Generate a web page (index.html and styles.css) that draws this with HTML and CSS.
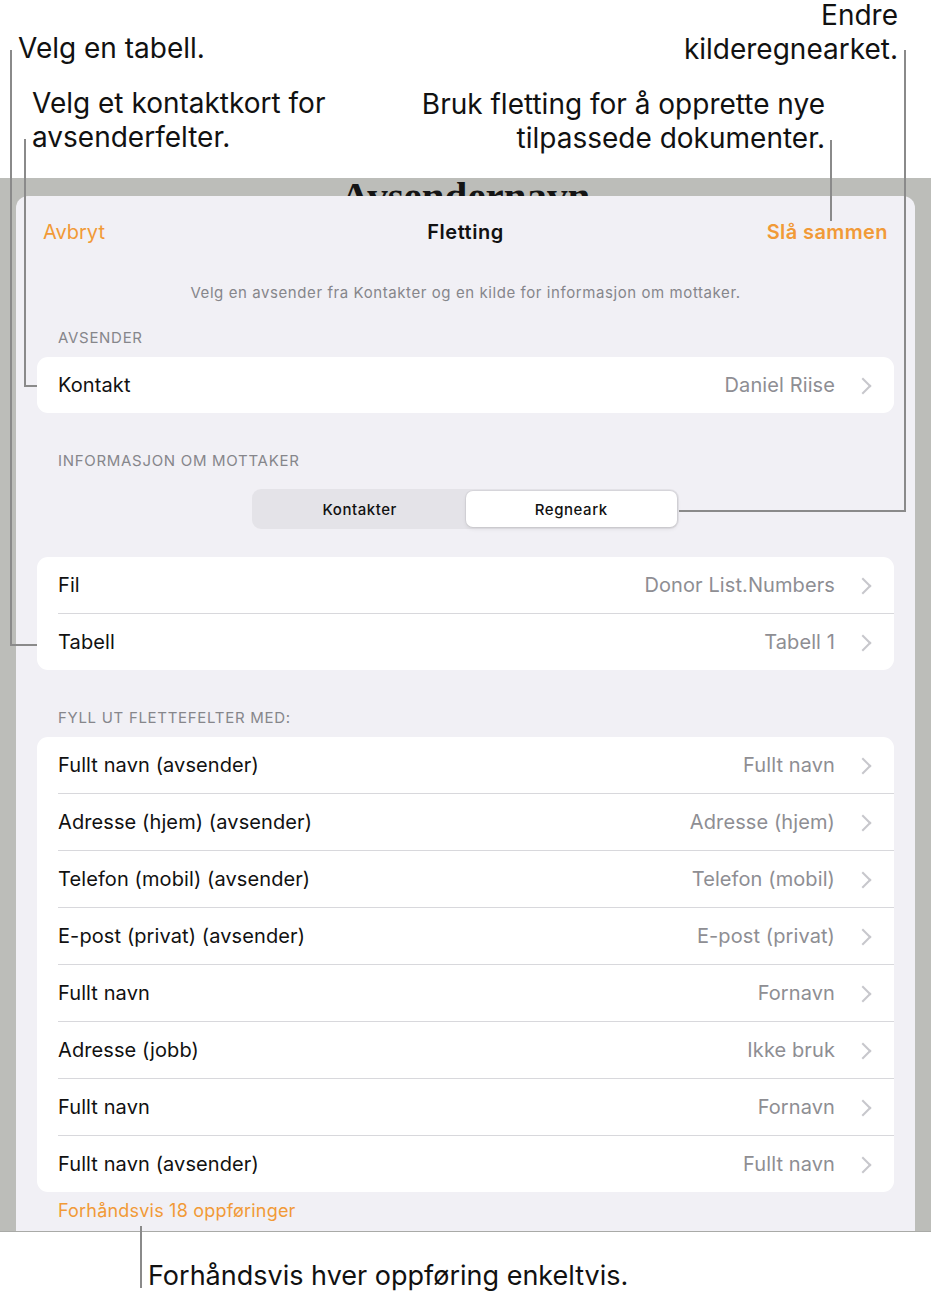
FILE: index.html
```html
<!DOCTYPE html>
<html lang="no">
<head>
<meta charset="utf-8">
<title>Fletting</title>
<link rel="stylesheet" href="styles.css">
</head>
<body>
<div class="page">
  <header class="callouts-top">
    <div class="col-left">
      <p class="note note-table">Velg en tabell.</p>
      <p class="note note-contact">Velg et kontaktkort for<br>avsenderfelter.</p>
    </div>
    <div class="col-right">
      <p class="note note-source">Endre<br>kilderegnearket.</p>
      <p class="note note-merge">Bruk fletting for å opprette nye<br>tilpassede dokumenter.</p>
    </div>
  </header>

  <section class="screen">
    <div class="bg-title">Avsendernavn</div>
    <div class="sheet">
      <nav class="navbar">
        <span class="nav-btn">Avbryt</span>
        <span class="nav-title">Fletting</span>
        <span class="nav-btn nav-strong">Slå sammen</span>
      </nav>
      <p class="desc">Velg en avsender fra Kontakter og en kilde for informasjon om mottaker.</p>

      <h2 class="sec-head">AVSENDER</h2>
      <div class="card">
        <div class="row"><span class="label">Kontakt</span><span class="value">Daniel Riise</span><span class="chev"></span></div>
      </div>

      <h2 class="sec-head sec-gap">INFORMASJON OM MOTTAKER</h2>
      <div class="seg">
        <span class="seg-item">Kontakter</span>
        <span class="seg-item seg-on">Regneark</span>
      </div>

      <div class="card card-gap">
        <div class="row"><span class="label">Fil</span><span class="value">Donor List.Numbers</span><span class="chev"></span></div>
        <div class="row"><span class="label">Tabell</span><span class="value">Tabell 1</span><span class="chev"></span></div>
      </div>

      <h2 class="sec-head sec-gap">FYLL UT FLETTEFELTER MED:</h2>
      <div class="card">
        <div class="row"><span class="label">Fullt navn (avsender)</span><span class="value">Fullt navn</span><span class="chev"></span></div>
        <div class="row"><span class="label">Adresse (hjem) (avsender)</span><span class="value">Adresse (hjem)</span><span class="chev"></span></div>
        <div class="row"><span class="label">Telefon (mobil) (avsender)</span><span class="value">Telefon (mobil)</span><span class="chev"></span></div>
        <div class="row"><span class="label">E-post (privat) (avsender)</span><span class="value">E-post (privat)</span><span class="chev"></span></div>
        <div class="row"><span class="label">Fullt navn</span><span class="value">Fornavn</span><span class="chev"></span></div>
        <div class="row"><span class="label">Adresse (jobb)</span><span class="value">Ikke bruk</span><span class="chev"></span></div>
        <div class="row"><span class="label">Fullt navn</span><span class="value">Fornavn</span><span class="chev"></span></div>
        <div class="row"><span class="label">Fullt navn (avsender)</span><span class="value">Fullt navn</span><span class="chev"></span></div>
      </div>

      <p class="preview">Forhåndsvis 18 oppføringer</p>
    </div>
  </section>

  <footer class="callouts-bottom">
    <p class="note note-preview">Forhåndsvis hver oppføring enkeltvis.</p>
  </footer>

  <!-- leader lines -->
  <span class="lead lead-a-v"></span>
  <span class="lead lead-a-h"></span>
  <span class="lead lead-b-v"></span>
  <span class="lead lead-b-h"></span>
  <span class="lead lead-c-v"></span>
  <span class="lead lead-d-v"></span>
  <span class="lead lead-d-h"></span>
  <span class="lead lead-e-v"></span>
</div>
</body>
</html>
```

FILE: styles.css
```css
* { box-sizing: border-box; }
html, body { margin: 0; padding: 0; background: #fff; }
body {
  font-family: Inter, "Noto Sans", "Liberation Sans", sans-serif;
  color: #111;
}
.page {
  position: relative;
  width: 931px;
  height: 1298px;
  overflow: hidden;
}

/* ---------- callouts ---------- */
.callouts-top {
  height: 178px;
  display: flex;
  justify-content: space-between;
}
.note {
  margin: 0;
  font-size: 28px;
  line-height: 34px;
  color: #111;
  letter-spacing: 0;
}
.col-left { padding-left: 18px; }
.note-table { margin-top: 31px; }
.note-contact { margin-top: 21px; margin-left: 14px; }
.col-right {
  text-align: right;
  padding-right: 33px;
}
.note-source { margin-top: -2px; }
.note-merge { margin-top: 21px; margin-right: 73px; }

.callouts-bottom { padding: 27px 0 0 148px; }
.note-preview { font-size: 27px; }

/* ---------- screen ---------- */
.screen {
  position: relative;
  height: 1054px;
  background: #bcbdb9;
  padding: 18px 16px 0 16px;
  overflow: hidden;
  border-bottom: 1px solid #a9aaa7;
}
.bg-title {
  position: absolute;
  left: 0; right: 0;
  top: -2px;
  text-align: center;
  font-family: "Liberation Serif", serif;
  font-weight: 700;
  font-size: 41px;
  line-height: 40px;
  color: #141414;
}
.sheet {
  position: relative;
  height: 100%;
  background: #f1f0f5;
  border-radius: 12px 12px 0 0;
  padding: 0 21px;
}

.navbar {
  height: 72px;
  display: flex;
  align-items: center;
  justify-content: space-between;
  padding: 0 6px;
  position: relative;
}
.nav-btn { color: #f19a37; font-size: 20px; }
.nav-strong { font-weight: 600; letter-spacing: 0.4px; }
.nav-title {
  position: absolute;
  left: 0; right: 0;
  text-align: center;
  font-size: 20px;
  font-weight: 600;
  letter-spacing: 0.5px;
  pointer-events: none;
}

.desc {
  margin: 15px 0 0;
  text-align: center;
  font-size: 15px;
  line-height: 20px;
  letter-spacing: 0.58px;
  color: #86868b;
}
.sec-head {
  margin: 25px 0 9px;
  padding-left: 21px;
  font-size: 15px;
  line-height: 20px;
  font-weight: 400;
  color: #86868b;
  letter-spacing: 0.7px;
}
.sec-gap { margin-top: 38px; }

.card {
  background: #fff;
  border-radius: 11px;
  overflow: hidden;
}
.card-gap { margin-top: 28px; }
.row {
  height: 57px;
  display: flex;
  align-items: center;
  padding: 0 25px 0 21px;
  position: relative;
  font-size: 20px;
  letter-spacing: 0.1px;
}
.row:first-child { height: 56px; }
.row + .row::before {
  content: "";
  position: absolute;
  top: 0; left: 21px; right: 0;
  height: 1px;
  background: #d8d8dc;
}
.label { flex: 1; color: #111; }
.value { color: #8e8e93; }
.chev {
  width: 10px;
  height: 16px;
  margin-left: 24px;
  position: relative;
}
.chev::after {
  content: "";
  position: absolute;
  top: 3px; left: -2px;
  width: 10px; height: 10px;
  border-top: 2px solid #c7c7cc;
  border-right: 2px solid #c7c7cc;
  transform: rotate(45deg);
}

.seg {
  width: 427px;
  height: 40px;
  margin: 18px auto 0;
  background: #e4e3e8;
  border-radius: 9px;
  display: flex;
  padding: 2px;
}
.seg-item {
  flex: 1;
  display: flex;
  align-items: center;
  justify-content: center;
  font-size: 15px;
  font-weight: 500;
  letter-spacing: 0.55px;
  color: #111;
  border-radius: 7px;
}
.seg-on {
  background: #fff;
  box-shadow: 0 0 0 1px rgba(0,0,0,0.05), 0 2px 4px rgba(0,0,0,0.08);
}

.preview {
  margin: 9px 0 0 21px;
  font-size: 18px;
  line-height: 20px;
  letter-spacing: 0.2px;
  color: #f19a37;
}

/* ---------- leader lines ---------- */
.lead { position: absolute; background: #8a8a8a; }
.lead-a-v { left: 10px; top: 50px; width: 2px; height: 596px; }
.lead-a-h { left: 10px; top: 644px; width: 27px; height: 2px; }
.lead-b-v { left: 24px; top: 139px; width: 2px; height: 248px; }
.lead-b-h { left: 24px; top: 385px; width: 13px; height: 2px; }
.lead-c-v { left: 830px; top: 140px; width: 2px; height: 81px; }
.lead-d-v { left: 904px; top: 50px; width: 2px; height: 462px; }
.lead-d-h { left: 679px; top: 510px; width: 227px; height: 2px; }
.lead-e-v { left: 140px; top: 1226px; width: 2px; height: 62px; }
```
